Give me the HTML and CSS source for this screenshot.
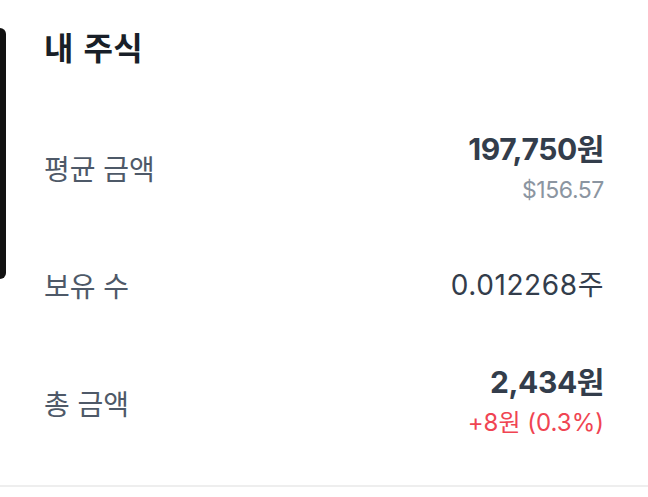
FILE: index.html
```html
<!DOCTYPE html>
<html lang="ko">
<head>
<meta charset="utf-8">
<link rel="stylesheet" href="styles.css">
</head>
<body>
<div class="side-bar"></div>
<main class="card">
  <h1 class="title">내 주식</h1>
  <div class="rows">
    <div class="row">
      <div class="label">평균 금액</div>
      <div class="value shifted">
        <div class="main bold">197,750원</div>
        <div class="sub gray">$156.57</div>
      </div>
    </div>
    <div class="row">
      <div class="label">보유 수</div>
      <div class="value">
        <div class="main">0.012268주</div>
      </div>
    </div>
    <div class="row">
      <div class="label">총 금액</div>
      <div class="value">
        <div class="main bold">2,434원</div>
        <div class="sub red">+8원 (0.3%)</div>
      </div>
    </div>
  </div>
</main>
<div class="divider"></div>
</body>
</html>
```
FILE: styles.css
```css
html, body {
  margin: 0;
  padding: 0;
  background: #ffffff;
}
body {
  width: 648px;
  height: 497px;
  overflow: hidden;
  position: relative;
  font-family: Inter, "Noto Sans CJK KR", sans-serif;
}
.side-bar {
  position: absolute;
  left: 0;
  top: 28px;
  width: 6px;
  height: 251px;
  background: #111111;
  border-radius: 0 6px 6px 0;
}
.card {
  padding: 26px 44px 0 44px;
  height: 457px;
  box-sizing: border-box;
}
.title {
  margin: 0;
  font-size: 32px;
  line-height: 40px;
  font-weight: 700;
  letter-spacing: 0.5px;
  color: #191f28;
  font-family: "Noto Sans CJK KR", sans-serif;
}
.rows {
  margin-top: 43px;
  display: flex;
  flex-direction: column;
}
.row {
  height: 117.5px;
  display: flex;
  align-items: center;
  justify-content: space-between;
}
.label {
  font-size: 28px;
  color: #4e5968;
  font-family: "Noto Sans CJK KR", sans-serif;
}
.value {
  display: flex;
  flex-direction: column;
  align-items: flex-end;
}
.value.shifted {
  padding-top: 4px;
}
.main {
  font-size: 28px;
  line-height: 40px;
  letter-spacing: 0.6px;
  color: #333d4b;
}
.main.bold {
  font-size: 30px;
  letter-spacing: -0.4px;
  font-weight: 700;
}
.sub {
  font-size: 24px;
  line-height: 42px;
}
.gray {
  color: #8b95a1;
  font-size: 23px;
  letter-spacing: -0.4px;
}
.red { color: #f04452; }
.divider {
  position: absolute;
  left: 0;
  right: 0;
  top: 485px;
  height: 2px;
  background: #eeeeee;
}
```
